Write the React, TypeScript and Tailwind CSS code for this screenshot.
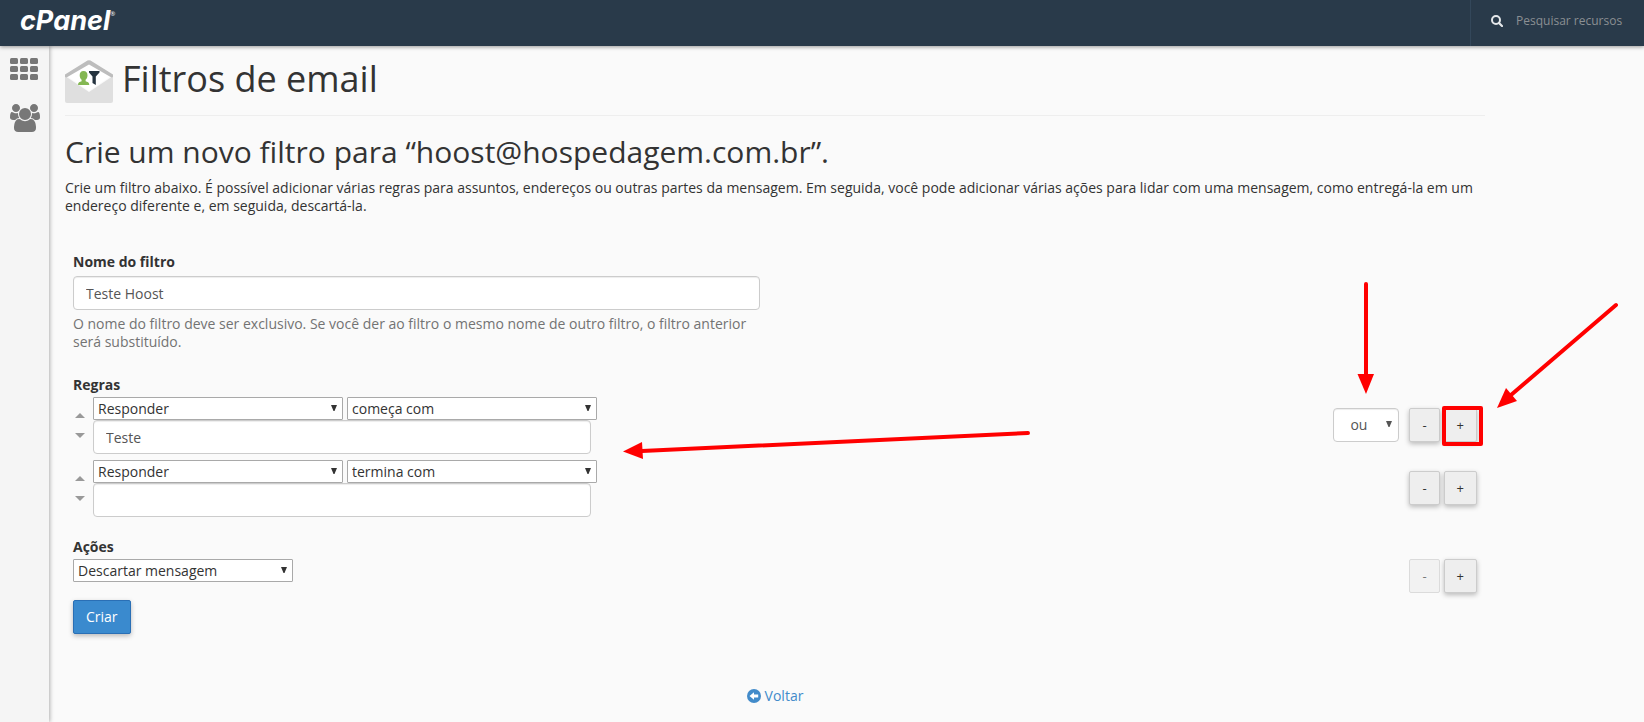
import { useState } from 'react'
import type { ReactNode } from 'react'
import clsx from 'clsx'

interface Rule {
  id: number
  part: string
  match: string
  value: string
}

const PARTS = ['De', 'Assunto', 'Para', 'Responder', 'Corpo']
const MATCHES = ['é igual a', 'contém', 'começa com', 'termina com']
const ACTIONS = ['Descartar mensagem', 'Redirecionar para email', 'Entregar na pasta']

const INITIAL_RULES: Rule[] = [
  { id: 1, part: 'Responder', match: 'começa com', value: 'Teste' },
  { id: 2, part: 'Responder', match: 'termina com', value: '' },
]

function GridIcon() {
  return (
    <svg viewBox="0 0 28 22" className="w-7 h-[22px] fill-[#777]">
      {[0, 8, 16].map(y =>
        [0, 10, 20].map(x => <rect key={`${x}-${y}`} x={x} y={y} width="8" height="6" rx="1.5" />)
      )}
    </svg>
  )
}

function UsersIcon() {
  return (
    <svg viewBox="0 0 1920 1792" className="w-[30px] h-7 fill-[#777]">
      <path d="M593 896q-162 5-265 128h-134q-82 0-138-40.5t-56-118.5q0-353 124-353 6 0 43.5 21t97.5 42.5 119 21.5q67 0 133-23-5 37-5 66 0 139 81 256zm1071 637q0 120-73 189.5t-194 69.5h-874q-121 0-194-69.5t-73-189.5q0-53 3.5-103.5t14-109 26.5-108.5 43-97.5 62-81 85.5-53.5 111.5-20q10 0 43 21.5t73 48 107 48 135 21.5 135-21.5 107-48 73-48 43-21.5q61 0 111.5 20t85.5 53.5 62 81 43 97.5 26.5 108.5 14 109 3.5 103.5zm-1024-1277q0 106-75 181t-181 75-181-75-75-181 75-181 181-75 181 75 75 181zm704 384q0 159-112.5 271.5t-271.5 112.5-271.5-112.5-112.5-271.5 112.5-271.5 271.5-112.5 271.5 112.5 112.5 271.5zm576 225q0 78-56 118.5t-138 40.5h-134q-103-123-265-128 81-117 81-256 0-29-5-66 66 23 133 23 59 0 119-21.5t97.5-42.5 43.5-21q124 0 124 353zm-128-609q0 106-75 181t-181 75-181-75-75-181 75-181 181-75 181 75 75 181z" />
    </svg>
  )
}

function SearchIcon() {
  return (
    <svg viewBox="0 0 12 12" className="w-3 h-3 shrink-0" fill="none" stroke="#e4e7ea">
      <circle cx="5" cy="5" r="4" strokeWidth="2" />
      <path d="M8 8l3 3" strokeWidth="2.2" strokeLinecap="round" />
    </svg>
  )
}

function FilterMailIcon() {
  return (
    <svg viewBox="0 0 48 48" className="w-12 h-12 shrink-0">
      <path d="M0 18v25q0 2 2 2h44q2 0 2-2V18L24 34z" fill="#dfdfdf" />
      <path d="M2 18L24 5l22 13-22 15z" fill="#fff" />
      <path d="M0 16.500L22.500 2.600q1.500-.9 3 0L48 16.500v2.500l-1.500.5L24 6.500 1.500 19.500 0 19z" fill="#bdbdbd" />
      <path d="M18.500 13c2.800 0 4 1.900 4 4.300 0 2-.8 3.500-1.900 4.500v1.500c1.800.6 3.700 1.100 3.700 3.700H13c0-2.600 1.800-3.100 3.600-3.700v-1.500c-1.100-1-1.900-2.500-1.900-4.500 0-2.400 1.200-4.300 3.800-4.300z" fill="#84b753" />
      <path d="M24 13h10.500v1.500l-3.700 4V27l-3.300-2v-6.500L24 14.500z" fill="#25333f" />
    </svg>
  )
}

function BackIcon() {
  return (
    <svg viewBox="0 0 14 14" className="w-3.5 h-3.5">
      <circle cx="7" cy="7" r="7" fill="#428bca" />
      <path d="M2.500 7L7 3.300v2.200h4.200v3H7v2.200z" fill="#fff" />
    </svg>
  )
}

function Select({
  label,
  value,
  options,
  onChange,
  className,
  large,
}: {
  label: string
  value: string
  options: string[]
  onChange: (v: string) => void
  className: string
  large?: boolean
}) {
  return (
    <span className={clsx('relative block', className)}>
      <select
        aria-label={label}
        value={value}
        onChange={e => onChange(e.target.value)}
        className={clsx(
          'block w-full appearance-none border bg-white text-sm leading-5',
          large
            ? 'h-[34px] pl-4 border-[#ccc] rounded text-[#555] shadow-[inset_0_1px_1px_rgba(0,0,0,0.075)]'
            : 'h-[23px] pl-1 border-[#a9a9a9] rounded-[1px] text-[#333]'
        )}
      >
        {options.map(o => (
          <option key={o}>{o}</option>
        ))}
      </select>
      <svg
        viewBox="0 0 6 6"
        className={clsx(
          'absolute w-1.5 h-1.5 pointer-events-none',
          large ? 'right-[7px] top-[13px] fill-[#555]' : 'right-1.5 top-2 fill-[#333]'
        )}
      >
        <path d="M0 0h6L3.500 6h-1z" />
      </svg>
    </span>
  )
}

function SquareButton({
  children,
  label,
  onClick,
  disabled,
}: {
  children: ReactNode
  label: string
  onClick?: () => void
  disabled?: boolean
}) {
  return (
    <button
      type="button"
      aria-label={label}
      onClick={onClick}
      disabled={disabled}
      className="h-[34px] px-3 border border-[#ccc] rounded-[2px] bg-[#eee] text-[13px] leading-4 text-[#333] shadow-[0_2px_5px_rgba(0,0,0,0.26)] disabled:opacity-65 disabled:shadow-none"
    >
      {children}
    </button>
  )
}

function Annotations() {
  return (
    <svg width="1644" height="722" className="absolute left-0 top-0 pointer-events-none" stroke="#f00" fill="#f00">
      <g strokeWidth="4" strokeLinecap="round">
        <path d="M1366 284v92" />
        <path d="M1616 305L1511 395" />
        <path d="M1028 433L642 451" />
      </g>
      <g stroke="none">
        <path d="M1357.500 374h16.500l-8 20z" />
        <path d="M1506 388l11 13-20 7z" />
        <path d="M642 442l1 17-20-7.500z" />
      </g>
    </svg>
  )
}

export default function App() {
  const [name, setName] = useState('Teste Hoost')
  const [rules, setRules] = useState<Rule[]>(INITIAL_RULES)
  const [joiner, setJoiner] = useState('ou')
  const [action, setAction] = useState(ACTIONS[0])

  function update(id: number, patch: Partial<Rule>) {
    setRules(rules.map(r => (r.id === id ? { ...r, ...patch } : r)))
  }

  function addAfter(index: number) {
    const next = [...rules]
    next.splice(index + 1, 0, { id: Date.now(), part: PARTS[0], match: MATCHES[0], value: '' })
    setRules(next)
  }

  function swap(index: number, other: number) {
    if (other < 0 || other >= rules.length) return
    const next = [...rules]
    next[index] = rules[other]
    next[other] = rules[index]
    setRules(next)
  }

  return (
    <div className="relative min-h-screen flex flex-col overflow-hidden bg-[#fafafa] font-['Open_Sans',sans-serif] text-sm leading-[18px] text-[#333]">
      <header className="relative z-10 h-[46px] flex justify-between bg-[#293a4a] shadow-[0_1px_4px_rgba(0,0,0,0.4)]">
        <a href="#" className="flex items-start pl-5 pt-[7px] text-white">
          <span className="font-['Inter',sans-serif] text-[27px] leading-7 font-bold italic">cPanel</span>
          <span className="text-[6px] leading-[14px]">®</span>
        </a>
        <label className="flex items-center w-[174px] pl-5 pb-1 gap-[13px] border-l border-[#33475a]">
          <SearchIcon />
          <input
            type="text"
            aria-label="Pesquisar recursos"
            placeholder="Pesquisar recursos"
            className="w-full min-w-0 bg-transparent text-xs text-white placeholder:text-[#8b8f93] outline-none"
          />
        </label>
      </header>

      <div className="flex flex-1">
        <nav className="w-[49px] shrink-0 flex flex-col items-start gap-6 pl-2.5 pt-3 bg-[#f5f5f5] shadow-[1px_0_4px_rgba(0,0,0,0.3)]">
          <a href="#" aria-label="Início">
            <GridIcon />
          </a>
          <a href="#" aria-label="Usuários">
            <UsersIcon />
          </a>
        </nav>

        <main className="flex-1 max-w-[1436px] pl-4 pt-3">
          <h1 className="flex items-start gap-[9px] h-[58px] border-b border-[#eee] text-4xl leading-[42px]">
            <FilterMailIcon />
            Filtros de email
          </h1>

          <h2 className="mt-[18px] text-[30px] leading-9">Crie um novo filtro para “hoost@hospedagem.com.br”.</h2>
          <p className="mt-[9px]">
            Crie um filtro abaixo. É possível adicionar várias regras para assuntos, endereços ou outras partes da
            mensagem. Em seguida, você pode adicionar várias ações para lidar com uma mensagem, como entregá-la em um
            endereço diferente e, em seguida, descartá-la.
          </p>

          <form className="px-2" onSubmit={e => e.preventDefault()}>
            <div className="mt-[38px] w-1/2 pr-[15px]">
              <label htmlFor="filter-name" className="block mb-[5px] font-bold">
                Nome do filtro
              </label>
              <input
                id="filter-name"
                type="text"
                value={name}
                onChange={e => setName(e.target.value)}
                className="block w-full h-[34px] px-3 border border-[#ccc] rounded bg-white text-[#555] shadow-[inset_0_1px_1px_rgba(0,0,0,0.075)]"
              />
              <p className="mt-[5px] text-[#737373]">
                O nome do filtro deve ser exclusivo. Se você der ao filtro o mesmo nome de outro filtro, o filtro
                anterior será substituído.
              </p>
            </div>

            <fieldset className="mt-[25px]">
              <legend className="mb-[3px] font-bold">Regras</legend>
              <div className="flex flex-col gap-1.5">
                {rules.map((rule, i) => (
                  <div key={rule.id} className="flex items-start">
                    <div className="w-5 pl-0.5 pt-4 flex flex-col gap-[15px]">
                      <button type="button" aria-label="Mover para cima" onClick={() => swap(i, i - 1)}>
                        <svg viewBox="0 0 10 5" className="block w-2.5 h-[5px] fill-[#999]">
                          <path d="M0 5L5 0l5 5z" />
                        </svg>
                      </button>
                      <button type="button" aria-label="Mover para baixo" onClick={() => swap(i, i + 1)}>
                        <svg viewBox="0 0 10 5" className="block w-2.5 h-[5px] fill-[#999]">
                          <path d="M0 0h10L5 5z" />
                        </svg>
                      </button>
                    </div>
                    <div>
                      <div className="flex gap-1">
                        <Select
                          label="Parte da mensagem"
                          value={rule.part}
                          options={PARTS}
                          onChange={part => update(rule.id, { part })}
                          className="w-[250px]"
                        />
                        <Select
                          label="Critério"
                          value={rule.match}
                          options={MATCHES}
                          onChange={match => update(rule.id, { match })}
                          className="w-[250px]"
                        />
                      </div>
                      <input
                        type="text"
                        aria-label="Valor da regra"
                        value={rule.value}
                        onChange={e => update(rule.id, { value: e.target.value })}
                        className="block w-[498px] h-[34px] px-3 border border-[#ccc] rounded bg-white text-[#555] shadow-[inset_0_1px_1px_rgba(0,0,0,0.075)]"
                      />
                    </div>
                    <div className="ml-auto mt-[11px] flex gap-1">
                      {i < rules.length - 1 && (
                        <Select
                          label="Operador"
                          value={joiner}
                          options={['ou', 'e']}
                          onChange={setJoiner}
                          className="w-[66px] mr-1.5"
                          large
                        />
                      )}
                      <SquareButton
                        label="Remover regra"
                        disabled={rules.length === 1}
                        onClick={() => setRules(rules.filter(r => r.id !== rule.id))}
                      >
                        -
                      </SquareButton>
                      <span className="relative">
                        <SquareButton label="Adicionar regra" onClick={() => addAfter(i)}>
                          +
                        </SquareButton>
                        {i === 0 && (
                          <span className="absolute -left-0.5 -top-0.5 w-[41px] h-10 border-4 border-[#f00] rounded-[2px] pointer-events-none" />
                        )}
                      </span>
                    </div>
                  </div>
                ))}
              </div>
            </fieldset>

            <fieldset className="mt-[21px]">
              <legend className="mb-[3px] font-bold">Ações</legend>
              <div className="flex items-start">
                <Select
                  label="Ação"
                  value={action}
                  options={ACTIONS}
                  onChange={setAction}
                  className="w-[220px]"
                />
                <div className="ml-auto flex gap-1">
                  <SquareButton label="Remover ação" disabled>
                    -
                  </SquareButton>
                  <SquareButton label="Adicionar ação">+</SquareButton>
                </div>
              </div>
            </fieldset>

            <button
              type="submit"
              className="mt-[7px] h-[34px] px-3 border border-[#2a6fb5] rounded-[2px] bg-[#3a8ace] text-white shadow-[0_2px_5px_rgba(0,0,0,0.26)]"
            >
              Criar
            </button>
          </form>

          <div className="mt-[53px] flex justify-center">
            <a href="#" className="flex items-center gap-1 text-[#428bca]">
              <BackIcon />
              Voltar
            </a>
          </div>
        </main>
      </div>

      <Annotations />
    </div>
  )
}
